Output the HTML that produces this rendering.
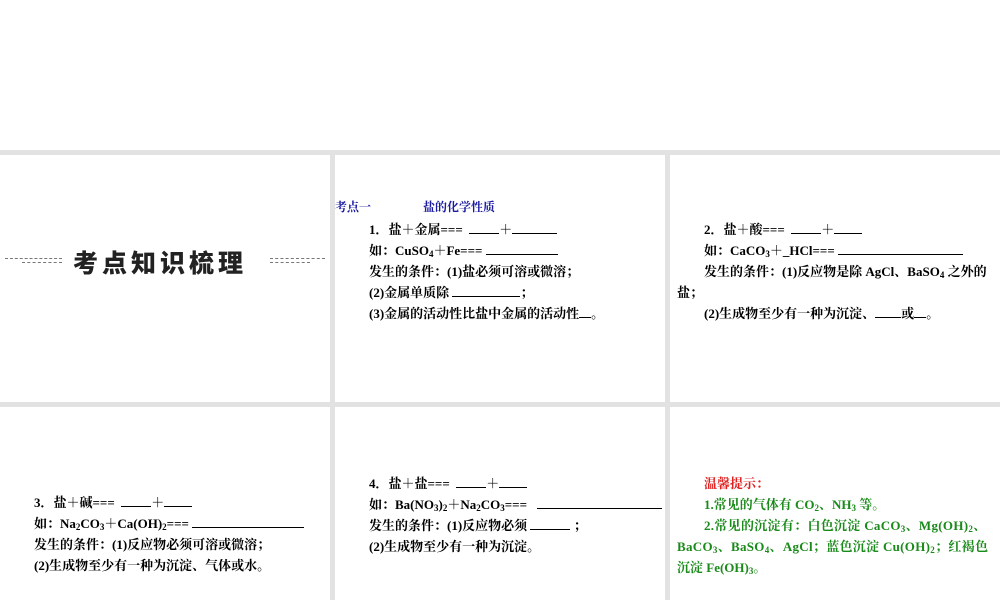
<!DOCTYPE html><html><head><meta charset="utf-8"><style>
body{margin:0;width:1000px;height:600px;background:#fff;position:relative;overflow:hidden;font-family:"Liberation Serif","Noto Serif CJK SC",serif;}
.g{position:absolute;background:#e2e2e2}
.t{position:absolute;font-size:13px;font-weight:bold;line-height:21px;white-space:nowrap;color:#000}
u{display:inline-block;border-bottom:1px solid #000;height:13px;vertical-align:baseline;text-decoration:none}
sub{font-size:9px;vertical-align:-2px;line-height:0}
.gr{color:#1a8a1a;font-family:"Liberation Serif","Noto Serif CJK SC",serif}
</style></head><body>
<div class="g" style="left:0;top:150px;width:1000px;height:5px"></div>
<div class="g" style="left:330px;top:150px;width:5px;height:450px"></div>
<div class="g" style="left:665px;top:150px;width:5px;height:450px"></div>
<div class="g" style="left:0;top:402px;width:1000px;height:5px"></div>
<div style="position:absolute;left:5px;top:258px;width:57px;border-top:1px dashed #777"></div>
<div style="position:absolute;left:22px;top:262px;width:40px;border-top:1px dashed #777"></div>
<div style="position:absolute;left:270px;top:258px;width:55px;border-top:1px dashed #777"></div>
<div style="position:absolute;left:270px;top:262px;width:40px;border-top:1px dashed #777"></div>
<div style="position:absolute;left:73px;top:244px;font-family:'Noto Sans CJK SC',sans-serif;font-weight:900;font-size:25px;letter-spacing:4px;color:#222">考点知识梳理</div>
<div class="t" style="left:335px;top:197px;font-size:12px;color:#1a1aa0">考点一<span style="margin-left:52px">盐的化学性质</span></div>
<div class="t" style="left:369px;top:219px">1．盐＋金属=== &nbsp;<u style="width:30px"></u>＋<u style="width:45px"></u><br>如：CuSO<sub>4</sub>＋Fe=== <u style="width:72px"></u><br>发生的条件：(1)盐必须可溶或微溶；<br>(2)金属单质除 <u style="width:68px"></u>；<br>(3)金属的活动性比盐中金属的活动性<u style="width:12px"></u>。</div>
<div class="t" style="left:704px;top:219px">2．盐＋酸=== &nbsp;<u style="width:30px"></u>＋<u style="width:28px"></u><br>如：CaCO<sub>3</sub>＋_HCl=== <u style="width:125px"></u><br>发生的条件：(1)反应物是除 AgCl、BaSO<sub>4</sub> 之外的</div>
<div class="t" style="left:677px;top:282px">盐；</div>
<div class="t" style="left:704px;top:303px">(2)生成物至少有一种为沉淀、<u style="width:26px"></u>或<u style="width:12px"></u>。</div>
<div class="t" style="left:34px;top:492px">3．盐＋碱=== &nbsp;<u style="width:30px"></u>＋<u style="width:28px"></u><br>如：Na<sub>2</sub>CO<sub>3</sub>＋Ca(OH)<sub>2</sub>=== <u style="width:112px"></u><br>发生的条件：(1)反应物必须可溶或微溶；<br>(2)生成物至少有一种为沉淀、气体或水。</div>
<div class="t" style="left:369px;top:473px">4．盐＋盐=== &nbsp;<u style="width:30px"></u>＋<u style="width:28px"></u><br>如：Ba(NO<sub>3</sub>)<sub>2</sub>＋Na<sub>2</sub>CO<sub>3</sub>=== &nbsp; <u style="width:125px"></u><br>发生的条件：(1)反应物必须 <u style="width:40px"></u> ；<br>(2)生成物至少有一种为沉淀。</div>
<div class="t" style="left:704px;top:473px;color:#e02020">温馨提示：</div>
<div class="t gr" style="left:704px;top:494px">1.常见的气体有 CO<sub>2</sub>、NH<sub>3</sub> 等。</div>
<div class="t gr" style="left:704px;top:515px;letter-spacing:0.3px">2.常见的沉淀有：白色沉淀 CaCO<sub>3</sub>、Mg(OH)<sub>2</sub>、</div>
<div class="t gr" style="left:677px;top:536px;letter-spacing:0.3px">BaCO<sub>3</sub>、BaSO<sub>4</sub>、AgCl；蓝色沉淀 Cu(OH)<sub>2</sub>；红褐色</div>
<div class="t gr" style="left:677px;top:557px">沉淀 Fe(OH)<sub>3</sub>。</div>
</body></html>
